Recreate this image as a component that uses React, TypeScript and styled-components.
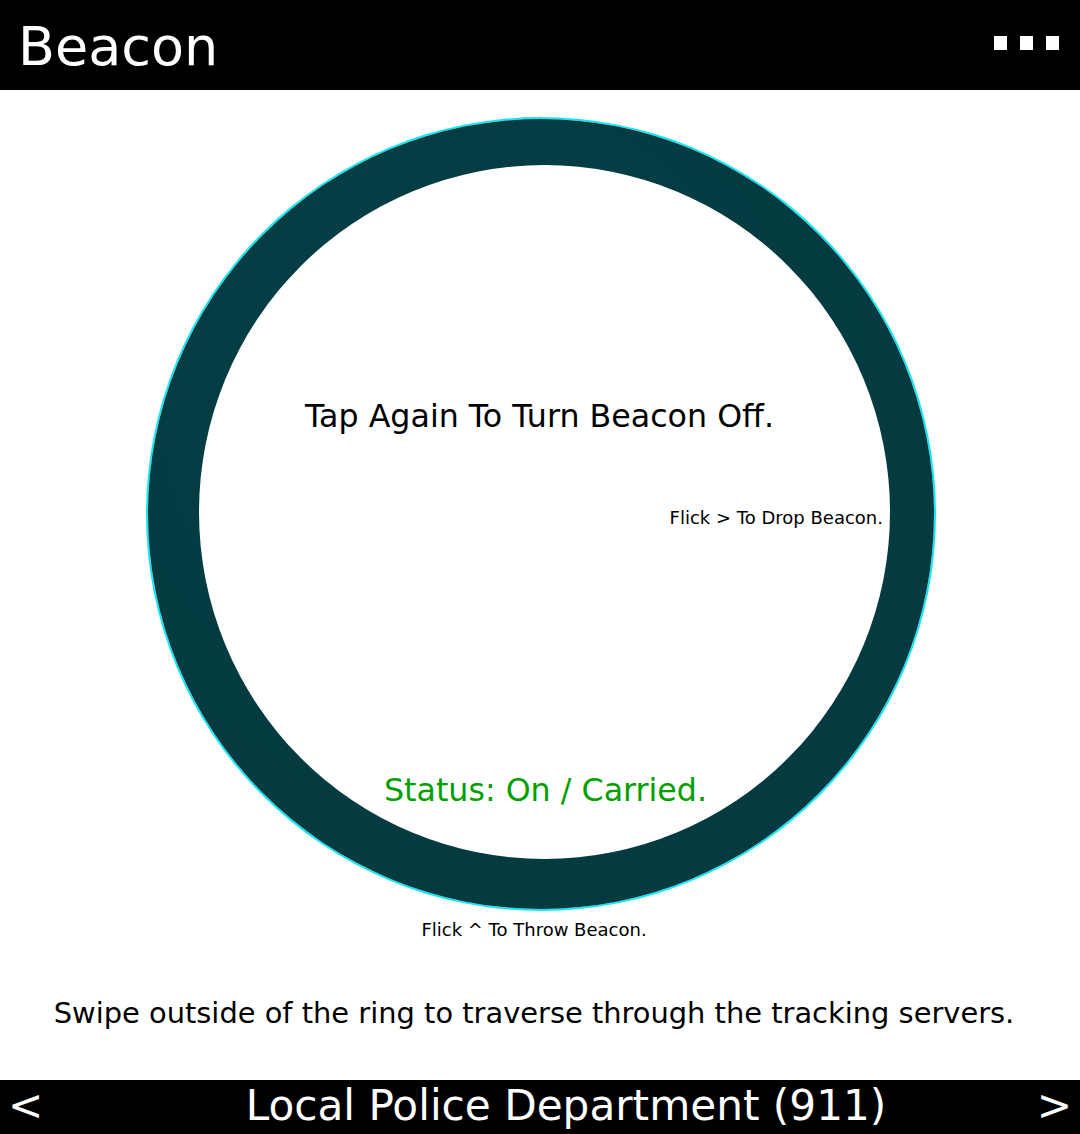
import React from "react";
import styled, { createGlobalStyle } from "styled-components";

const Global = createGlobalStyle`
  html, body { margin: 0; padding: 0; background: #ffffff; }
  body { font-family: "DejaVu Sans", Verdana, sans-serif; }
`;

const Page = styled.div`
  width: 1080px;
  height: 1134px;
  display: flex;
  flex-direction: column;
  background: #ffffff;
  overflow: hidden;
`;

const Header = styled.header`
  height: 90px;
  flex: none;
  background: #000;
  display: flex;
  align-items: center;
  justify-content: space-between;
  padding: 0 21px 0 18px;
  box-sizing: border-box;
`;

const Title = styled.h1`
  margin: 0;
  color: #fff;
  font-weight: normal;
  font-size: 54px;
  line-height: 1;
  margin-top: 4px;
`;

const Menu = styled.div`
  display: flex;
  gap: 13px;
  margin-top: -4px;
`;

const Dot = styled.span`
  width: 13px;
  height: 14px;
  background: #fff;
  display: block;
`;

const Main = styled.main`
  flex: 1;
  display: flex;
  flex-direction: column;
  align-items: center;
`;

const Ring = styled.div`
  margin-top: 29px;
  margin-left: 2px;
  width: 786px;
  height: 790px;
  flex: none;
  border-radius: 50%;
  background: radial-gradient(circle at 40% 35%, #053f45 0%, #033b41 60%, #023a40 100%);
  box-shadow: 0 0 0 2px #12e8f4;
  display: flex;
  align-items: flex-start;
`;

const Inner = styled.div`
  margin: 46px 0 0 51px;
  width: 691px;
  height: 694px;
  border-radius: 50%;
  background: #fff;
  display: flex;
  flex-direction: column;
  align-items: center;
`;

const BigText = styled.div<{ $color?: string; $top: number; $shift?: number }>`
  font-size: 31.7px;
  line-height: 36px;
  color: ${(p) => p.$color ?? "#000"};
  margin-top: ${(p) => p.$top}px;
  margin-left: ${(p) => p.$shift ?? 0}px;
  white-space: nowrap;
`;

const SmallText = styled.div<{ $top?: number }>`
  font-size: 18px;
  line-height: 22px;
  color: #000;
  white-space: nowrap;
  margin-top: ${(p) => p.$top ?? 0}px;
  margin-right: 12px;
`;

const SideHint = styled(SmallText)`
  align-self: flex-end;
  margin-right: 7px;
`;

const Instruction = styled.div`
  font-size: 28.9px;
  line-height: 34px;
  color: #000;
  margin-top: 55px;
  margin-right: 12px;
  white-space: nowrap;
`;

const Footer = styled.footer`
  height: 54px;
  flex: none;
  background: #000;
  color: #fff;
  display: flex;
  align-items: center;
  padding: 0 8px 0 8px;
  box-sizing: border-box;
  font-size: 42.2px;
`;

const Arrow = styled.span`
  line-height: 1;
  margin-top: -2px;
`;

const Station = styled.div`
  flex: 1;
  text-align: center;
  padding-left: 52px;
  line-height: 1;
  margin-top: -2px;
  white-space: nowrap;
`;

export default function App() {
  return (
    <Page>
      <Global />
      <Header>
        <Title>Beacon</Title>
        <Menu>
          <Dot />
          <Dot />
          <Dot />
        </Menu>
      </Header>
      <Main>
        <Ring>
          <Inner>
            <BigText $top={233} $shift={-10}>
              Tap Again To Turn Beacon Off.
            </BigText>
            <SideHint $top={73}>Flick &gt; To Drop Beacon.</SideHint>
            <BigText $top={243} $shift={2} $color="#00a000">
              Status: On / Carried.
            </BigText>
          </Inner>
        </Ring>
        <SmallText $top={10}>Flick ^ To Throw Beacon.</SmallText>
        <Instruction>
          Swipe outside of the ring to traverse through the tracking servers.
        </Instruction>
      </Main>
      <Footer>
        <Arrow>&lt;</Arrow>
        <Station>Local Police Department (911)</Station>
        <Arrow>&gt;</Arrow>
      </Footer>
    </Page>
  );
}
